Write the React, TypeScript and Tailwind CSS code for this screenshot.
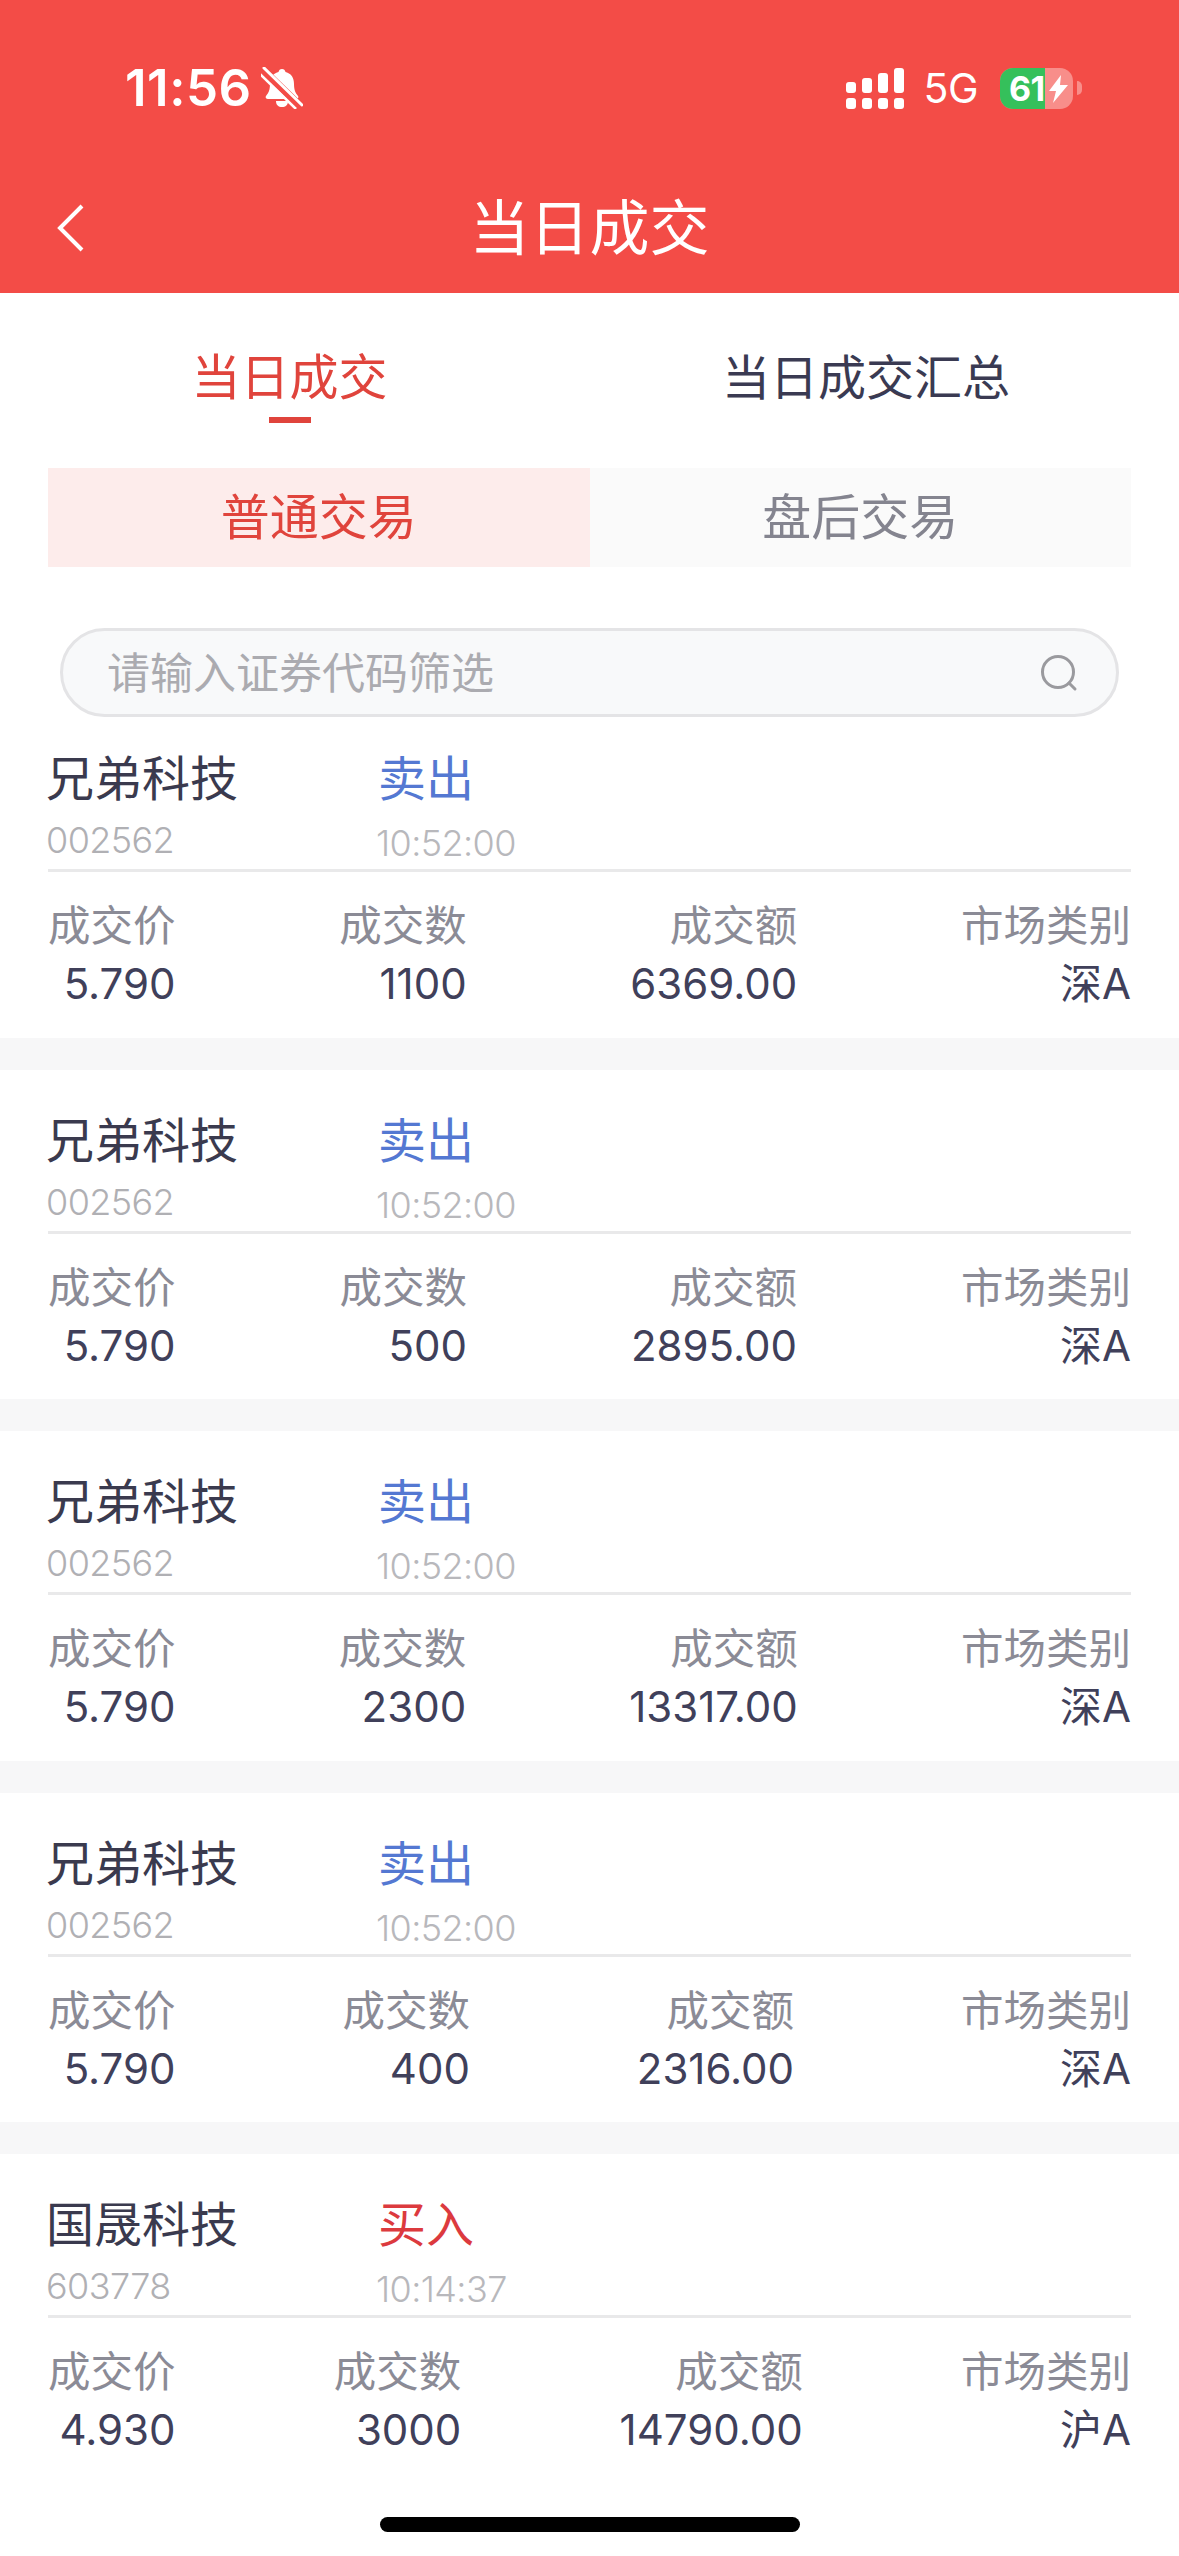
import type { ReactNode } from 'react';

interface Trade {
  name: string;
  code: string;
  side: '买入' | '卖出';
  time: string;
  price: string;
  qty: string;
  amount: string;
  market: string;
}

const trades: Trade[] = [
  { name: '兄弟科技', code: '002562', side: '卖出', time: '10:52:00', price: '5.790', qty: '1100', amount: '6369.00', market: '深A' },
  { name: '兄弟科技', code: '002562', side: '卖出', time: '10:52:00', price: '5.790', qty: '500', amount: '2895.00', market: '深A' },
  { name: '兄弟科技', code: '002562', side: '卖出', time: '10:52:00', price: '5.790', qty: '2300', amount: '13317.00', market: '深A' },
  { name: '兄弟科技', code: '002562', side: '卖出', time: '10:52:00', price: '5.790', qty: '400', amount: '2316.00', market: '深A' },
  { name: '国晟科技', code: '603778', side: '买入', time: '10:14:37', price: '4.930', qty: '3000', amount: '14790.00', market: '沪A' },
];

function Cell({ label, children }: { label: string; children: ReactNode }) {
  return (
    <div className="flex flex-col items-end">
      <div className="text-[42.5px] leading-[42px] text-[#8b8b96]">{label}</div>
      <div className="mt-[16px] text-[42px] leading-[42px] text-[#40405a]">{children}</div>
    </div>
  );
}

function TradeCard({ trade, first }: { trade: Trade; first: boolean }) {
  return (
    <div className={first ? 'px-[48px] pt-[38px] pb-[32.6px]' : 'px-[48px] pt-[47px] pb-[32.6px]'}>
      <div className="-ml-[2px] flex">
        <div className="w-[332px]">
          <div className="text-[48px] leading-[48px] text-[#3a3a4e]">{trade.name}</div>
          <div className="mt-[19px] text-[36px] leading-[36px] font-light tracking-[-0.6px] text-[#b0b0b4]">{trade.code}</div>
        </div>
        <div>
          <div className={trade.side === '买入' ? 'text-[48px] leading-[48px] text-[#dc3a3e]' : 'text-[48px] leading-[48px] text-[#5478d2]'}>
            {trade.side}
          </div>
          <div className="mt-[22px] -ml-[2px] text-[36px] leading-[36px] font-light tracking-[-0.6px] text-[#b8b8bc]">{trade.time}</div>
        </div>
      </div>
      <div className="mt-[8px] h-[3px] bg-[#e9e9ea]" />
      <div className="mt-[33px] flex justify-between">
        <Cell label="成交价">{trade.price}</Cell>
        <Cell label="成交数">{trade.qty}</Cell>
        <Cell label="成交额">{trade.amount}</Cell>
        <Cell label="市场类别">{trade.market}</Cell>
      </div>
    </div>
  );
}

function StatusBar() {
  return (
    <div className="flex h-[56px] items-center justify-between pl-[125px] pr-[97px]">
      <div className="flex items-center">
        <span className="font-['Inter',sans-serif] text-[51px] font-semibold leading-[56px] tracking-[0.5px] text-white">11:56</span>
        <svg className="ml-[9px]" width="42" height="42" viewBox="0 0 42 42">
          <path d="M21 2c2 0 3 1 3.500 3 6 1.500 8.500 6 8.500 12 0 6 1.500 9 4 12 1 1.500 0 3-2 3H7c-2 0-3-1.500-2-3 2.500-3 4-6 4-12 0-6 2.500-10.500 8.500-12C18 3 19 2 21 2z" fill="#fff" />
          <path d="M15 34h12c0 4-2.500 6-6 6s-6-2-6-6z" fill="#fff" />
          <path d="M2 3l37 36" stroke="#f34c47" strokeWidth="8" />
          <path d="M3 1l38 37" stroke="#fff" strokeWidth="3" strokeLinecap="round" />
          <path d="M-1 7l36 35" stroke="#fff" strokeWidth="2.500" />
        </svg>
      </div>
      <div className="flex items-center">
        <svg width="58" height="41" viewBox="0 0 58 41" fill="#fff">
          <rect x="0" y="14" width="10" height="11" rx="3" />
          <rect x="16" y="10" width="10" height="15" rx="3" />
          <rect x="32" y="5" width="10" height="20" rx="3" />
          <rect x="48" y="0" width="10" height="25" rx="3" />
          <rect x="0" y="30" width="10" height="11" rx="3" />
          <rect x="16" y="30" width="10" height="11" rx="3" />
          <rect x="32" y="30" width="10" height="11" rx="3" />
          <rect x="48" y="30" width="10" height="11" rx="3" />
        </svg>
        <span className="ml-[19px] font-['Inter',sans-serif] text-[41px] font-normal leading-[41px] tracking-[-0.5px] text-white">5G</span>
        <div className="ml-[22px] relative h-[41px] w-[73px] overflow-hidden rounded-[13px] bg-[#f88e8a]">
          <div className="h-full w-[45px] bg-[#35c05b]" />
          <span className="absolute left-[9px] top-0 font-['Inter',sans-serif] text-[34px] font-bold leading-[41px] tracking-[-0.5px] text-white">61</span>
          <svg className="absolute left-[49px] top-[7px]" width="19" height="28" viewBox="0 0 19 28">
            <path d="M12 0L0 16h7l-3 12L19 10h-8z" fill="#fff" />
          </svg>
        </div>
        <div className="ml-[4px] h-[14px] w-[5px] rounded-r-full bg-[#f88e8a]" />
      </div>
    </div>
  );
}

export default function App() {
  return (
    <div className="relative h-[2556px] w-[1179px] overflow-hidden bg-white font-['Inter','Noto_Sans_CJK_SC',sans-serif]">
      <div className="bg-[#f34c47] pt-[60px] pb-[37px]">
        <StatusBar />
        <div className="mt-[84px] grid h-[56px] grid-cols-[1fr_auto_1fr] items-center">
          <div className="pl-[57px]">
            <svg width="28" height="48" viewBox="0 0 28 48" fill="none">
              <path d="M25 2L3 24l22 22" stroke="#fff" strokeWidth="4" />
            </svg>
          </div>
          <div className="text-[60px] leading-[56px] text-white">当日成交</div>
          <div />
        </div>
      </div>

      <div className="mt-[61px] grid grid-cols-[579px_574px]">
        <div className="flex flex-col items-center">
          <div className="text-[49px] leading-[48px] text-[#e0443c]">当日成交</div>
          <div className="mt-[15px] h-[6px] w-[42px] bg-[#e0443c]" />
        </div>
        <div className="text-center text-[48px] leading-[48px] text-[#3a3a52]">当日成交汇总</div>
      </div>

      <div className="mx-[48px] mt-[45px] grid h-[99px] grid-cols-2 text-[49px]">
        <div className="flex items-center justify-center bg-[#fdeceb] text-[#e0443c]">普通交易</div>
        <div className="flex items-center justify-center bg-[#fafafa] text-[#84848f]">盘后交易</div>
      </div>

      <div className="mx-[60px] mt-[61px] flex h-[89px] items-center justify-between rounded-full border-[3px] border-[#e4e4e6] bg-[#f8f9fa] pl-[44px] pr-[38px]">
        <span className="text-[43px] leading-[48px] text-[#ababb0]">请输入证券代码筛选</span>
        <svg width="38" height="38" viewBox="0 0 38 38" fill="none">
          <circle cx="18" cy="18" r="15.500" stroke="#9a9a9e" strokeWidth="3" />
          <path d="M29 29l6 6" stroke="#9a9a9e" strokeWidth="3" strokeLinecap="round" />
        </svg>
      </div>

      <div>
        {trades.map((trade, i) => (
          <div key={i}>
            {i > 0 && <div className="h-[32px] bg-[#f7f7f8]" />}
            <TradeCard trade={trade} first={i === 0} />
          </div>
        ))}
      </div>

      {/* home indicator */}
      <div className="absolute bottom-[24px] left-[380px] h-[15px] w-[420px] rounded-full bg-black" />
    </div>
  );
}
